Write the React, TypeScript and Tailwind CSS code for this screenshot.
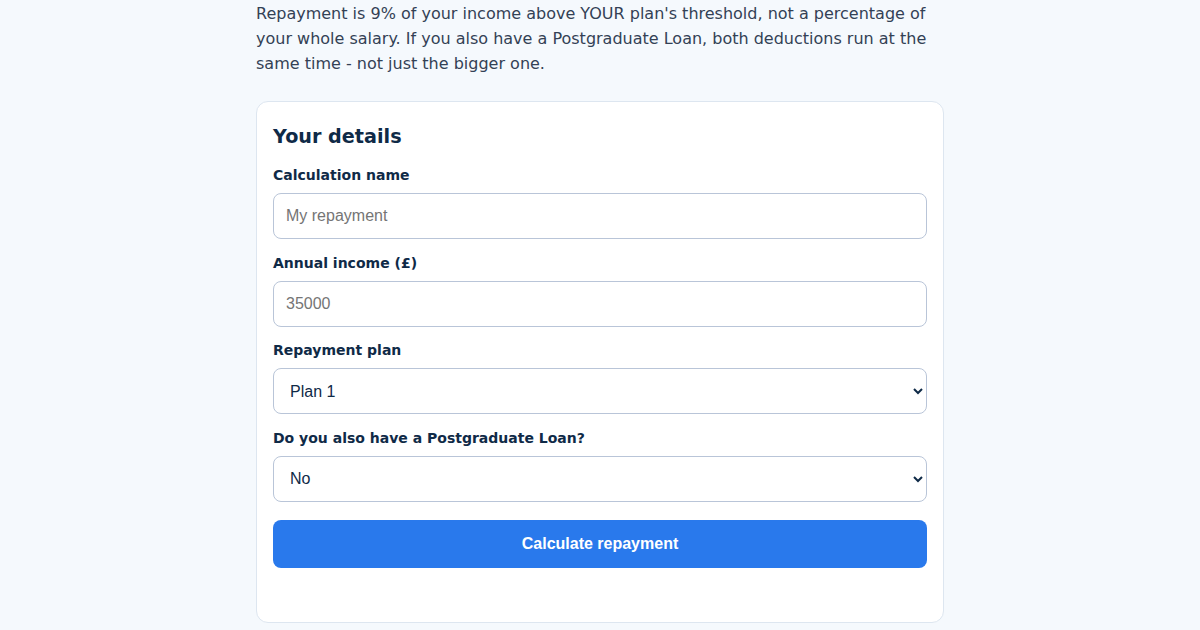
export default function App() {
  return (
    <div className="min-h-screen bg-[#f5f9fd] font-['DejaVu_Sans',sans-serif]">
      <div className="mx-auto w-[688px]">
        <p className="pt-px text-[16px] leading-[25px] text-[#334155]">
          Repayment is 9% of your income above YOUR plan's threshold, not a percentage of your whole salary. If you also
          have a Postgraduate Loan, both deductions run at the same time - not just the bigger one.
        </p>

        <div className="mt-[25px] rounded-xl border border-[#dde6f0] bg-white px-4 pt-5 pb-[54px]">
          <h2 className="text-[19.2px] leading-[30px] font-bold text-[#0f2a47]">Your details</h2>

          <div className="mt-[13px] flex flex-col gap-[13.67px]">
            <div className="flex flex-col gap-2">
              <label className="text-[14px] leading-[20px] font-bold text-[#0f2a47]">Calculation name</label>
              <input
                placeholder="My repayment"
                className="h-[46px] rounded-lg border border-[#b9c5d8] bg-white px-3 font-['Liberation_Sans',sans-serif] text-[16px] text-[#1f2937] placeholder:text-[#757575]"
              />
            </div>

            <div className="flex flex-col gap-2">
              <label className="text-[14px] leading-[20px] font-bold text-[#0f2a47]">Annual income (£)</label>
              <input
                placeholder="35000"
                className="h-[46px] rounded-lg border border-[#b9c5d8] bg-white px-3 font-['Liberation_Sans',sans-serif] text-[16px] text-[#1f2937] placeholder:text-[#757575]"
              />
            </div>

            <div className="flex flex-col gap-2">
              <label className="text-[14px] leading-[20px] font-bold text-[#0f2a47]">Repayment plan</label>
              <select
                defaultValue="plan1"
                className="h-[46px] rounded-lg border border-[#b9c5d8] bg-white px-3 font-['Liberation_Sans',sans-serif] text-[16px] text-[#0f2a47]"
              >
                <option value="plan1">Plan 1</option>
                <option value="plan2">Plan 2</option>
                <option value="plan4">Plan 4</option>
                <option value="plan5">Plan 5</option>
              </select>
            </div>

            <div className="flex flex-col gap-2">
              <label className="text-[14px] leading-[20px] font-bold text-[#0f2a47]">
                Do you also have a Postgraduate Loan?
              </label>
              <select
                defaultValue="no"
                className="h-[46px] rounded-lg border border-[#b9c5d8] bg-white px-3 font-['Liberation_Sans',sans-serif] text-[16px] text-[#0f2a47]"
              >
                <option value="no">No</option>
                <option value="yes">Yes</option>
              </select>
            </div>
          </div>

          <button className="mt-[18px] h-12 w-full rounded-lg bg-[#2979ec] font-['Liberation_Sans',sans-serif] text-[16px] font-bold text-white">
            Calculate repayment
          </button>
        </div>
      </div>
    </div>
  )
}
